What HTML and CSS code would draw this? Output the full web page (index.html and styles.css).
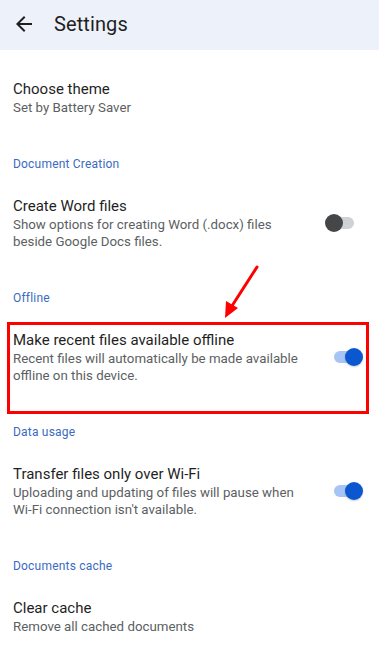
FILE: index.html
```html
<!DOCTYPE html>
<html lang="en">
<head>
  <meta charset="UTF-8">
  <title>Settings</title>
  <link rel="stylesheet" href="styles.css">
</head>
<body>

  <header class="appbar">
    <svg class="back" viewBox="0 0 24 24" width="24" height="24">
      <path d="M20 11H7.83l5.59-5.59L12 4l-8 8 8 8 1.41-1.41L7.83 13H20v-2z" fill="#1f1f1f"/>
    </svg>
    <h1>Settings</h1>
  </header>

  <main class="list">
    <div class="item">
      <div class="text">
        <div class="title">Choose theme</div>
        <div class="sub">Set by Battery Saver</div>
      </div>
    </div>

    <div class="section">Document Creation</div>
    <div class="item">
      <div class="text">
        <div class="title">Create Word files</div>
        <div class="sub">Show options for creating Word (.docx) files<br>beside Google Docs files.</div>
      </div>
      <div class="toggle off"><span class="track"></span><span class="thumb"></span></div>
    </div>

    <div class="section">Offline</div>
    <div class="item marked">
      <div class="text">
        <div class="title">Make recent files available offline</div>
        <div class="sub">Recent files will automatically be made available<br>offline on this device.</div>
      </div>
      <div class="toggle on"><span class="track"></span><span class="thumb"></span></div>
      <span class="highlight"></span>
    </div>

    <div class="section">Data usage</div>
    <div class="item">
      <div class="text">
        <div class="title">Transfer files only over Wi-Fi</div>
        <div class="sub">Uploading and updating of files will pause when<br>Wi-Fi connection isn't available.</div>
      </div>
      <div class="toggle on"><span class="track"></span><span class="thumb"></span></div>
    </div>

    <div class="section">Documents cache</div>
    <div class="item">
      <div class="text">
        <div class="title">Clear cache</div>
        <div class="sub">Remove all cached documents</div>
      </div>
    </div>
  </main>

  <!-- annotation arrow -->
  <svg class="pointer" width="379" height="645" viewBox="0 0 379 645">
    <line x1="257" y1="267" x2="230" y2="309" stroke="#ff0000" stroke-width="3" stroke-linecap="round"/>
    <polygon points="225,318 226,301 238,308" fill="#ff0000"/>
  </svg>

</body>
</html>
```

FILE: styles.css
```css
* {
  margin: 0;
  padding: 0;
  box-sizing: border-box;
}

body {
  width: 379px;
  height: 645px;
  overflow: hidden;
  background: #fff;
  font-family: Roboto, "Noto Sans", sans-serif;
  color: #1f1f1f;
  position: relative;
}

.appbar {
  height: 50px;
  background: #edf2fa;
  display: flex;
  align-items: center;
  padding-left: 12px;
  padding-bottom: 8px;
  padding-top: 6px;
}

.appbar .back {
  display: block;
}

.appbar h1 {
  font-size: 20px;
  font-weight: 400;
  margin-left: 18px;
  letter-spacing: 0.1px;
}

.list {
  padding-top: 13px;
}

.section {
  padding: 24px 13px 8px;
  font-size: 12px;
  line-height: 16px;
  color: #3a6bbf;
  letter-spacing: 0.2px;
}

.item {
  position: relative;
  display: flex;
  align-items: center;
  padding: 16px 16px 16px 13px;
}

.item .text {
  flex: 1;
}

.title {
  font-size: 15px;
  line-height: 20px;
  color: #1f1f1f;
}

.sub {
  font-size: 13.3px;
  line-height: 17px;
  color: #5c5f63;
}

.toggle {
  position: relative;
  width: 30px;
  height: 20px;
  flex-shrink: 0;
}

.toggle .track {
  position: absolute;
  left: 1px;
  right: 1px;
  top: 4px;
  height: 12px;
  border-radius: 6px;
}

.toggle .thumb {
  position: absolute;
  top: 1px;
  width: 18px;
  height: 18px;
  border-radius: 50%;
}

.toggle.off {
  margin-right: 8px;
}

.toggle.off .track {
  background: #cfd1d3;
}

.toggle.off .thumb {
  left: 0;
  background: #444648;
}

.toggle.on .track {
  background: #a7c4f6;
}

.toggle.on .thumb {
  right: 0;
  background: #0b57d0;
  box-shadow: 0 1px 2px rgba(0, 0, 0, 0.2);
}

.highlight {
  position: absolute;
  top: 8px;
  left: 7px;
  width: 362px;
  height: 92px;
  border: 3px solid #ff0000;
  pointer-events: none;
}

.pointer {
  position: absolute;
  top: 0;
  left: 0;
  pointer-events: none;
}
```
